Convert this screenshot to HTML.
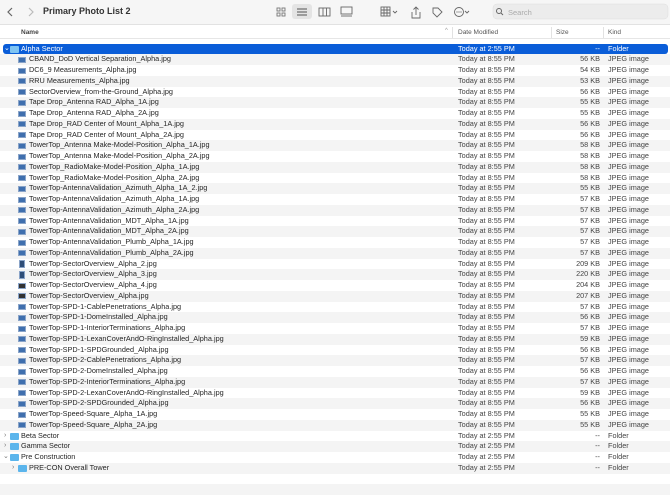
<!DOCTYPE html><html><head><style>
*{margin:0;padding:0;box-sizing:border-box}
body{width:670px;height:489px;overflow:hidden;background:#fff;font-family:"Liberation Sans",sans-serif;font-size:7.3px;color:#262626;position:relative}
.tb{position:absolute;left:0;top:0;width:670px;height:25px;background:#f6f6f6;border-bottom:1px solid #e2e2e2}
.hd{position:absolute;left:0;top:26px;width:670px;height:13px;border-bottom:1px solid #e6e6e6;color:#555}
.r{position:absolute;left:0;width:670px;height:10.75px;line-height:10.75px;white-space:nowrap}
.r:nth-child(even){background:#f4f4f4}
.r span,.r i{position:absolute;z-index:1}
.n{left:29px}.d{left:458px;color:#444}.s{right:70px;text-align:right;color:#444}.k{left:608px;color:#444}
.ic{position:absolute;left:18px;top:2.5px;width:8px;height:6px;background:#3f6fae;border:1px solid #8aa4c8}
.f .n{left:21px}.f .ic{left:10px;top:2px;width:9px;height:7px;background:#5bb5ec;border:none;border-radius:1px}
.sub .n{left:29px}.sub .ic{left:18px}
.sel{background:none!important;color:#fff}
.sel::before{content:"";position:absolute;left:3px;top:0;width:665px;height:10.75px;background:#0a5dd8;border-radius:3px}
.sel span{color:#fff}.sel .ic{background:#7fc4f2}
.ch{position:absolute;font-size:7px;color:#777}
</style></head><body>
<div class="tb">
<svg width="670" height="25" style="position:absolute;left:0;top:0">
<path d="M12 8 L8 12 L12 16" stroke="#666" fill="none" stroke-width="1.2"/>
<path d="M29 8 L33 12 L29 16" stroke="#bbb" fill="none" stroke-width="1.2"/>
<g stroke="#777" fill="none" stroke-width="0.9">
<rect x="277" y="8" width="3" height="3"/><rect x="282" y="8" width="3" height="3"/><rect x="277" y="13" width="3" height="3"/><rect x="282" y="13" width="3" height="3"/>
</g>
<rect x="292" y="4" width="20" height="15" rx="3" fill="#e4e4e4"/>
<g stroke="#555" stroke-width="1"><path d="M297 9h10M297 12h10M297 15h10"/></g>
<g stroke="#666" fill="none" stroke-width="0.9"><rect x="319" y="8" width="11" height="8"/><path d="M323 8v8M326.5 8v8"/>
<rect x="341" y="7" width="11" height="7"/><path d="M341 16h11"/>
<rect x="381" y="7" width="9" height="9"/><path d="M381 10h9M381 13h9M384 7v9M387 7v9M393 11l2 2 2-2"/>
<path d="M412 12v6h8v-6M416 7v8M413.5 9.5l2.5-2.5 2.5 2.5"/>
<path d="M433 8h5l4 4-5 5-4-4z"/>
<circle cx="459" cy="12" r="4.5"/><path d="M465 11l2 2 2-2"/></g>
<circle cx="457" cy="12" r=".6" fill="#666"/><circle cx="459" cy="12" r=".6" fill="#666"/><circle cx="461" cy="12" r=".6" fill="#666"/>
<rect x="493" y="4" width="175" height="15" rx="4" fill="#ececec" stroke="#ddd" stroke-width="0.5"/>
<circle cx="499" cy="11" r="2.5" stroke="#666" fill="none"/><path d="M501 13l2 2" stroke="#666"/>
</svg>
<div style="position:absolute;left:43px;top:6px;font-size:9px;font-weight:bold;color:#333">Primary Photo List 2</div>
<div style="position:absolute;left:508px;top:8px;font-size:7.5px;color:#aaa">Search</div>
</div>
<div class="hd"><span style="position:absolute;left:21px;top:3px;font-weight:bold;font-size:6.5px;color:#444">Name</span><span style="position:absolute;left:445px;top:2px;font-size:6px;color:#999">^</span>
<span style="position:absolute;left:452px;top:1px;height:11px;border-left:1px solid #e2e2e2"></span><span style="position:absolute;left:458px;top:3px;font-size:6.5px">Date Modified</span>
<span style="position:absolute;left:551px;top:1px;height:11px;border-left:1px solid #e2e2e2"></span><span style="position:absolute;left:556px;top:3px;font-size:6.5px">Size</span>
<span style="position:absolute;left:603px;top:1px;height:11px;border-left:1px solid #e2e2e2"></span><span style="position:absolute;left:608px;top:3px;font-size:6.5px">Kind</span></div>
<div style="position:absolute;left:0;top:43.5px;width:670px">
<div class="r f sel" style="top:0"><span class="ch" style="left:4px;color:#fff">⌄</span><i class="ic"></i><span class="n">Alpha Sector</span><span class="d">Today at 2:55 PM</span><span class="s">--</span><span class="k">Folder</span></div>
<div class="r" style="top:10.75px"><i class="ic"></i><span class="n">CBAND_DoD Vertical Separation_Alpha.jpg</span><span class="d">Today at 8:55 PM</span><span class="s">56 KB</span><span class="k">JPEG image</span></div>
<div class="r" style="top:21.5px"><i class="ic"></i><span class="n">DC6_9 Measurements_Alpha.jpg</span><span class="d">Today at 8:55 PM</span><span class="s">54 KB</span><span class="k">JPEG image</span></div>
<div class="r" style="top:32.25px"><i class="ic"></i><span class="n">RRU Measurements_Alpha.jpg</span><span class="d">Today at 8:55 PM</span><span class="s">53 KB</span><span class="k">JPEG image</span></div>
<div class="r" style="top:43px"><i class="ic"></i><span class="n">SectorOverview_from-the-Ground_Alpha.jpg</span><span class="d">Today at 8:55 PM</span><span class="s">56 KB</span><span class="k">JPEG image</span></div>
<div class="r" style="top:53.75px"><i class="ic"></i><span class="n">Tape Drop_Antenna RAD_Alpha_1A.jpg</span><span class="d">Today at 8:55 PM</span><span class="s">55 KB</span><span class="k">JPEG image</span></div>
<div class="r" style="top:64.5px"><i class="ic"></i><span class="n">Tape Drop_Antenna RAD_Alpha_2A.jpg</span><span class="d">Today at 8:55 PM</span><span class="s">55 KB</span><span class="k">JPEG image</span></div>
<div class="r" style="top:75.25px"><i class="ic"></i><span class="n">Tape Drop_RAD Center of Mount_Alpha_1A.jpg</span><span class="d">Today at 8:55 PM</span><span class="s">56 KB</span><span class="k">JPEG image</span></div>
<div class="r" style="top:86px"><i class="ic"></i><span class="n">Tape Drop_RAD Center of Mount_Alpha_2A.jpg</span><span class="d">Today at 8:55 PM</span><span class="s">56 KB</span><span class="k">JPEG image</span></div>
<div class="r" style="top:96.75px"><i class="ic"></i><span class="n">TowerTop_Antenna Make-Model-Position_Alpha_1A.jpg</span><span class="d">Today at 8:55 PM</span><span class="s">58 KB</span><span class="k">JPEG image</span></div>
<div class="r" style="top:107.5px"><i class="ic"></i><span class="n">TowerTop_Antenna Make-Model-Position_Alpha_2A.jpg</span><span class="d">Today at 8:55 PM</span><span class="s">58 KB</span><span class="k">JPEG image</span></div>
<div class="r" style="top:118.25px"><i class="ic"></i><span class="n">TowerTop_RadioMake-Model-Position_Alpha_1A.jpg</span><span class="d">Today at 8:55 PM</span><span class="s">58 KB</span><span class="k">JPEG image</span></div>
<div class="r" style="top:129px"><i class="ic"></i><span class="n">TowerTop_RadioMake-Model-Position_Alpha_2A.jpg</span><span class="d">Today at 8:55 PM</span><span class="s">58 KB</span><span class="k">JPEG image</span></div>
<div class="r" style="top:139.75px"><i class="ic"></i><span class="n">TowerTop-AntennaValidation_Azimuth_Alpha_1A_2.jpg</span><span class="d">Today at 8:55 PM</span><span class="s">55 KB</span><span class="k">JPEG image</span></div>
<div class="r" style="top:150.5px"><i class="ic"></i><span class="n">TowerTop-AntennaValidation_Azimuth_Alpha_1A.jpg</span><span class="d">Today at 8:55 PM</span><span class="s">57 KB</span><span class="k">JPEG image</span></div>
<div class="r" style="top:161.25px"><i class="ic"></i><span class="n">TowerTop-AntennaValidation_Azimuth_Alpha_2A.jpg</span><span class="d">Today at 8:55 PM</span><span class="s">57 KB</span><span class="k">JPEG image</span></div>
<div class="r" style="top:172px"><i class="ic"></i><span class="n">TowerTop-AntennaValidation_MDT_Alpha_1A.jpg</span><span class="d">Today at 8:55 PM</span><span class="s">57 KB</span><span class="k">JPEG image</span></div>
<div class="r" style="top:182.75px"><i class="ic"></i><span class="n">TowerTop-AntennaValidation_MDT_Alpha_2A.jpg</span><span class="d">Today at 8:55 PM</span><span class="s">57 KB</span><span class="k">JPEG image</span></div>
<div class="r" style="top:193.5px"><i class="ic"></i><span class="n">TowerTop-AntennaValidation_Plumb_Alpha_1A.jpg</span><span class="d">Today at 8:55 PM</span><span class="s">57 KB</span><span class="k">JPEG image</span></div>
<div class="r" style="top:204.25px"><i class="ic"></i><span class="n">TowerTop-AntennaValidation_Plumb_Alpha_2A.jpg</span><span class="d">Today at 8:55 PM</span><span class="s">57 KB</span><span class="k">JPEG image</span></div>
<div class="r" style="top:215px"><i class="ic" style="width:6px;height:8px;top:1.5px;left:19px;background:#2f4e78"></i><span class="n">TowerTop-SectorOverview_Alpha_2.jpg</span><span class="d">Today at 8:55 PM</span><span class="s">209 KB</span><span class="k">JPEG image</span></div>
<div class="r" style="top:225.75px"><i class="ic" style="width:6px;height:8px;top:1.5px;left:19px;background:#2f4e78"></i><span class="n">TowerTop-SectorOverview_Alpha_3.jpg</span><span class="d">Today at 8:55 PM</span><span class="s">220 KB</span><span class="k">JPEG image</span></div>
<div class="r" style="top:236.5px"><i class="ic" style="background:#333"></i><span class="n">TowerTop-SectorOverview_Alpha_4.jpg</span><span class="d">Today at 8:55 PM</span><span class="s">204 KB</span><span class="k">JPEG image</span></div>
<div class="r" style="top:247.25px"><i class="ic" style="background:#333"></i><span class="n">TowerTop-SectorOverview_Alpha.jpg</span><span class="d">Today at 8:55 PM</span><span class="s">207 KB</span><span class="k">JPEG image</span></div>
<div class="r" style="top:258px"><i class="ic"></i><span class="n">TowerTop-SPD-1-CablePenetrations_Alpha.jpg</span><span class="d">Today at 8:55 PM</span><span class="s">57 KB</span><span class="k">JPEG image</span></div>
<div class="r" style="top:268.75px"><i class="ic"></i><span class="n">TowerTop-SPD-1-DomeInstalled_Alpha.jpg</span><span class="d">Today at 8:55 PM</span><span class="s">56 KB</span><span class="k">JPEG image</span></div>
<div class="r" style="top:279.5px"><i class="ic"></i><span class="n">TowerTop-SPD-1-InteriorTerminations_Alpha.jpg</span><span class="d">Today at 8:55 PM</span><span class="s">57 KB</span><span class="k">JPEG image</span></div>
<div class="r" style="top:290.25px"><i class="ic"></i><span class="n">TowerTop-SPD-1-LexanCoverAndO-RingInstalled_Alpha.jpg</span><span class="d">Today at 8:55 PM</span><span class="s">59 KB</span><span class="k">JPEG image</span></div>
<div class="r" style="top:301px"><i class="ic"></i><span class="n">TowerTop-SPD-1-SPDGrounded_Alpha.jpg</span><span class="d">Today at 8:55 PM</span><span class="s">56 KB</span><span class="k">JPEG image</span></div>
<div class="r" style="top:311.75px"><i class="ic"></i><span class="n">TowerTop-SPD-2-CablePenetrations_Alpha.jpg</span><span class="d">Today at 8:55 PM</span><span class="s">57 KB</span><span class="k">JPEG image</span></div>
<div class="r" style="top:322.5px"><i class="ic"></i><span class="n">TowerTop-SPD-2-DomeInstalled_Alpha.jpg</span><span class="d">Today at 8:55 PM</span><span class="s">56 KB</span><span class="k">JPEG image</span></div>
<div class="r" style="top:333.25px"><i class="ic"></i><span class="n">TowerTop-SPD-2-InteriorTerminations_Alpha.jpg</span><span class="d">Today at 8:55 PM</span><span class="s">57 KB</span><span class="k">JPEG image</span></div>
<div class="r" style="top:344px"><i class="ic"></i><span class="n">TowerTop-SPD-2-LexanCoverAndO-RingInstalled_Alpha.jpg</span><span class="d">Today at 8:55 PM</span><span class="s">59 KB</span><span class="k">JPEG image</span></div>
<div class="r" style="top:354.75px"><i class="ic"></i><span class="n">TowerTop-SPD-2-SPDGrounded_Alpha.jpg</span><span class="d">Today at 8:55 PM</span><span class="s">56 KB</span><span class="k">JPEG image</span></div>
<div class="r" style="top:365.5px"><i class="ic"></i><span class="n">TowerTop-Speed-Square_Alpha_1A.jpg</span><span class="d">Today at 8:55 PM</span><span class="s">55 KB</span><span class="k">JPEG image</span></div>
<div class="r" style="top:376.25px"><i class="ic"></i><span class="n">TowerTop-Speed-Square_Alpha_2A.jpg</span><span class="d">Today at 8:55 PM</span><span class="s">55 KB</span><span class="k">JPEG image</span></div>
<div class="r f" style="top:387px"><span class="ch" style="left:4px">›</span><i class="ic"></i><span class="n">Beta Sector</span><span class="d">Today at 2:55 PM</span><span class="s">--</span><span class="k">Folder</span></div>
<div class="r f" style="top:397.75px"><span class="ch" style="left:4px">›</span><i class="ic"></i><span class="n">Gamma Sector</span><span class="d">Today at 2:55 PM</span><span class="s">--</span><span class="k">Folder</span></div>
<div class="r f" style="top:408.5px"><span class="ch" style="left:3px">⌄</span><i class="ic"></i><span class="n">Pre Construction</span><span class="d">Today at 2:55 PM</span><span class="s">--</span><span class="k">Folder</span></div>
<div class="r f sub" style="top:419.25px"><span class="ch" style="left:12px">›</span><i class="ic"></i><span class="n">PRE-CON Overall Tower</span><span class="d">Today at 2:55 PM</span><span class="s">--</span><span class="k">Folder</span></div>
<div class="r" style="top:430px"></div>
<div class="r" style="top:440.75px"></div>
</div>
</body></html>
